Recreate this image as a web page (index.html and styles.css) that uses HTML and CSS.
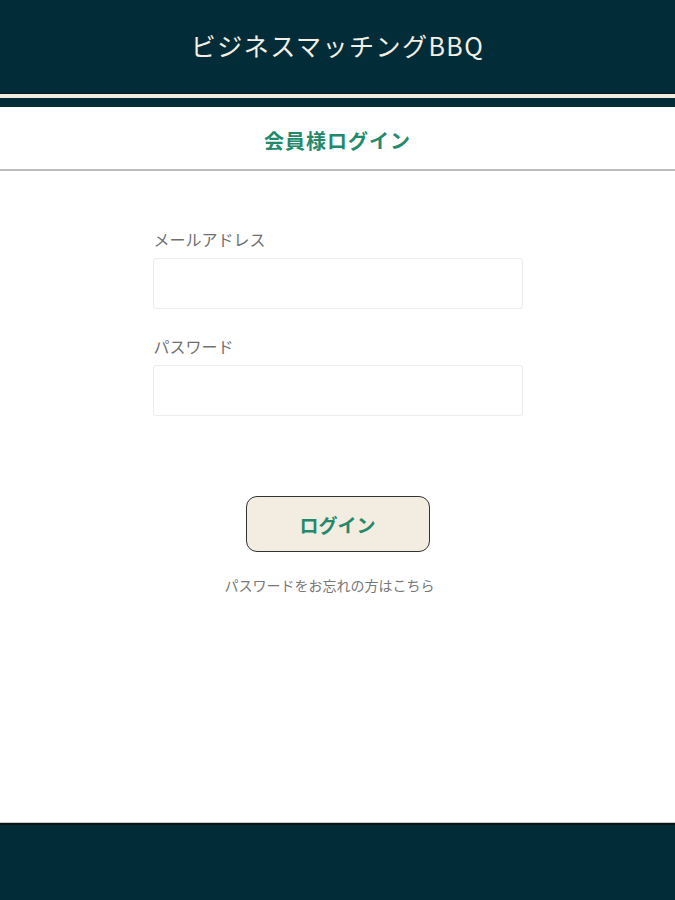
FILE: index.html
```html
<!DOCTYPE html>
<html lang="ja">
<head>
<meta charset="utf-8">
<title>会員様ログイン | ビジネスマッチングBBQ</title>
<link rel="stylesheet" href="styles.css">
</head>
<body>
<div class="page">
  <header class="site-header">
    <div class="site-title">ビジネスマッチングBBQ</div>
  </header>
  <div class="header-stripe"></div>
  <div class="page-heading">
    <h1>会員様ログイン</h1>
  </div>
  <main class="main">
    <form class="login-form">
      <label class="field-label" for="email">メールアドレス</label>
      <input class="field-input" id="email" type="email">
      <label class="field-label second" for="password">パスワード</label>
      <input class="field-input" id="password" type="password">
      <div class="actions">
        <button class="login-btn" type="button">ログイン</button>
        <a class="forgot" href="#">パスワードをお忘れの方はこちら</a>
      </div>
    </form>
  </main>
  <footer class="site-footer"></footer>
</div>
</body>
</html>
```
FILE: styles.css
```css
* { box-sizing: border-box; }
html, body { margin: 0; padding: 0; }
body {
  font-family: "Noto Sans CJK JP", "Noto Sans", sans-serif;
  background: #ffffff;
  color: #666;
}
.page {
  min-height: 100vh;
  display: flex;
  flex-direction: column;
}
.site-header {
  height: 93px;
  background: #022d38;
  display: flex;
  align-items: center;
  justify-content: center;
}
.site-title {
  color: #f4efe4;
  font-size: 25px;
  letter-spacing: 1.5px;
  line-height: 1;
  margin-top: -2px;
}
.header-stripe {
  height: 14px;
  background: #022d38;
  border-top: 1px solid #0a1a20;
  box-shadow: inset 0 4px 0 #f3ecdc;
}
.page-heading {
  height: 64px;
  border-bottom: 2px solid #bcbcbc;
  display: flex;
  align-items: center;
  justify-content: center;
}
.page-heading h1 {
  margin: 0;
  font-size: 20px;
  font-weight: 700;
  color: #23896b;
  letter-spacing: 1px;
  margin-top: 4px;
}
.main { flex: 1; }
.login-form {
  width: 370px;
  margin: 0 auto;
  padding-top: 56px;
  display: flex;
  flex-direction: column;
}
.field-label {
  font-size: 16px;
  line-height: 24px;
  color: #707070;
  padding-left: 1px;
}
.field-label.second { margin-top: 25px; }
.field-input {
  margin-top: 7px;
  height: 51px;
  border: 1px solid #ececec;
  border-radius: 3px;
  background: #fff;
  font-size: 16px;
  padding: 0 12px;
  outline: none;
}
.actions {
  margin-top: 80px;
  display: flex;
  flex-direction: column;
  align-items: center;
}
.login-btn {
  width: 184px;
  height: 56px;
  background: #f3ece0;
  border: 1.5px solid #333;
  border-radius: 11px;
  color: #23896b;
  font-family: inherit;
  font-size: 19px;
  font-weight: 700;
  cursor: pointer;
}
.forgot {
  margin-top: 23px;
  margin-right: 16px;
  font-size: 14px;
  line-height: 20px;
  color: #777;
  text-decoration: none;
}
.site-footer {
  height: 77px;
  background: #022d38;
  border-top: 2px solid #0b1416;
  box-shadow: 0 -1px 0 #c8c8c8;
}
```
